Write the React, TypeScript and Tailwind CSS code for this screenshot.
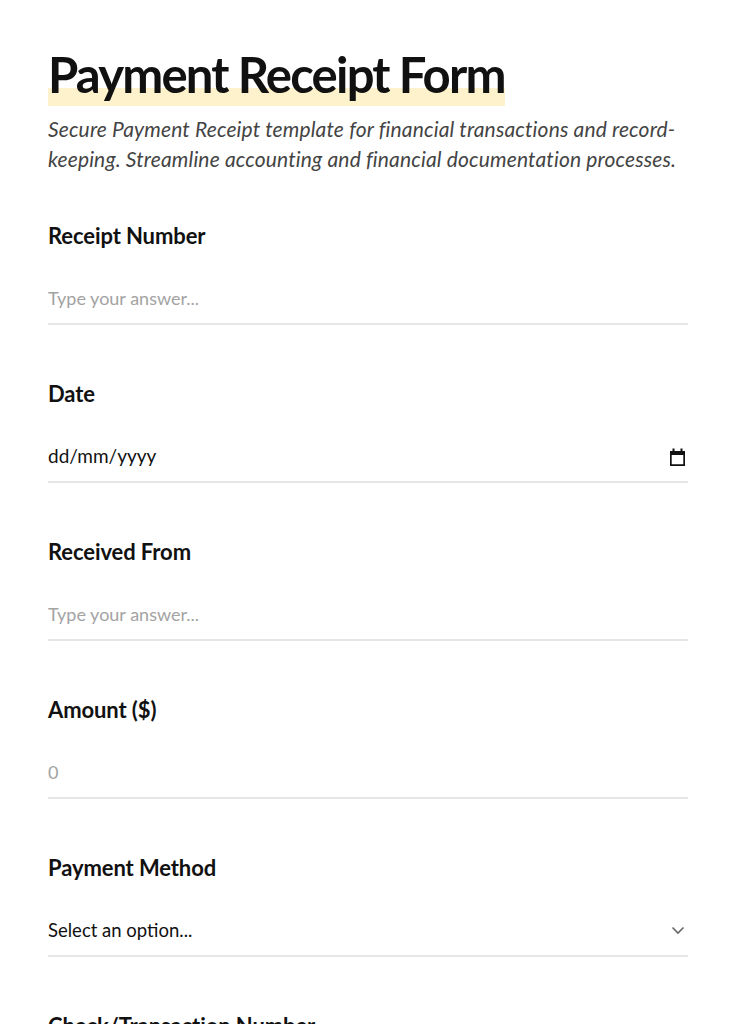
import { useState } from "react";

type FieldKind = "text" | "date" | "number" | "select";

interface Field {
  id: string;
  label: string;
  kind: FieldKind;
  placeholder?: string;
}

const FIELDS: Field[] = [
  { id: "receipt", label: "Receipt Number", kind: "text", placeholder: "Type your answer..." },
  { id: "date", label: "Date", kind: "date" },
  { id: "from", label: "Received From", kind: "text", placeholder: "Type your answer..." },
  { id: "amount", label: "Amount ($)", kind: "number", placeholder: "0" },
  { id: "method", label: "Payment Method", kind: "select" },
  { id: "check", label: "Check/Transaction Number", kind: "text", placeholder: "Type your answer..." },
  { id: "purpose", label: "Purpose of Payment", kind: "text", placeholder: "Type your answer..." },
];

const FONT = "font-['Lato','Liberation_Sans',sans-serif]";

export default function App() {
  return (
    <div className={`min-h-screen bg-white text-[#111] ${FONT}`}>
      <div className="px-12 pt-[44px] pb-16">
        <h1 className="relative inline-block text-[49px] font-bold leading-[60px] tracking-[-1.8px]">
          <span className="absolute left-0 right-0 bottom-[-2px] h-[18px] bg-[#fdf2cc]" />
          <span className="relative">Payment Receipt Form</span>
        </h1>
        <p className="mt-[10px] text-[21px] italic leading-[30px] text-[#444] tracking-[0.15px]">
          Secure Payment Receipt template for financial transactions and record-keeping. Streamline accounting and
          financial documentation processes.
        </p>

        <div className="mt-[48px] flex flex-col gap-[55px]">
          {FIELDS.map((f) => (
            <FieldRow key={f.id} field={f} />
          ))}
        </div>
      </div>
    </div>
  );
}

function FieldRow({ field }: { field: Field }) {
  const [value, setValue] = useState("");

  return (
    <div>
      <label className="block text-[22px] font-bold leading-[28px] tracking-[-0.1px]">{field.label}</label>
      <div className="mt-[24px] flex items-center h-[51px] border-b-2 border-[#e5e5e5]">
        {field.kind === "date" && (
          <div className="flex-1 flex items-center justify-between text-[19px] text-[#111] pr-[2px]">
            <span>dd/mm/yyyy</span>
            <CalendarIcon />
          </div>
        )}
        {field.kind === "select" && (
          <div className="flex-1 flex items-center justify-between text-[18.5px] text-[#111] pr-[3px]">
            <span>Select an option...</span>
            <svg width="14" height="9" viewBox="0 0 14 9" fill="none" stroke="#666" strokeWidth="1.6">
              <path d="M1.5 1.5 7 7l5.5-5.5" />
            </svg>
          </div>
        )}
        {(field.kind === "text" || field.kind === "number") && (
          <input
            type="text"
            value={value}
            onChange={(e) => setValue(e.target.value)}
            placeholder={field.placeholder}
            className="flex-1 bg-transparent outline-none text-[18px] text-[#111] placeholder:text-[#a3a3a3]"
          />
        )}
      </div>
    </div>
  );
}

function CalendarIcon() {
  return (
    <svg width="17" height="18" viewBox="0 0 17 18" fill="#111">
      <rect x="3.5" y="0.5" width="2" height="3" />
      <rect x="11.5" y="0.5" width="2" height="3" />
      <path d="M1 3h15v15H1z M2.7 7v9.3h11.6V7z" fillRule="evenodd" />
    </svg>
  );
}
